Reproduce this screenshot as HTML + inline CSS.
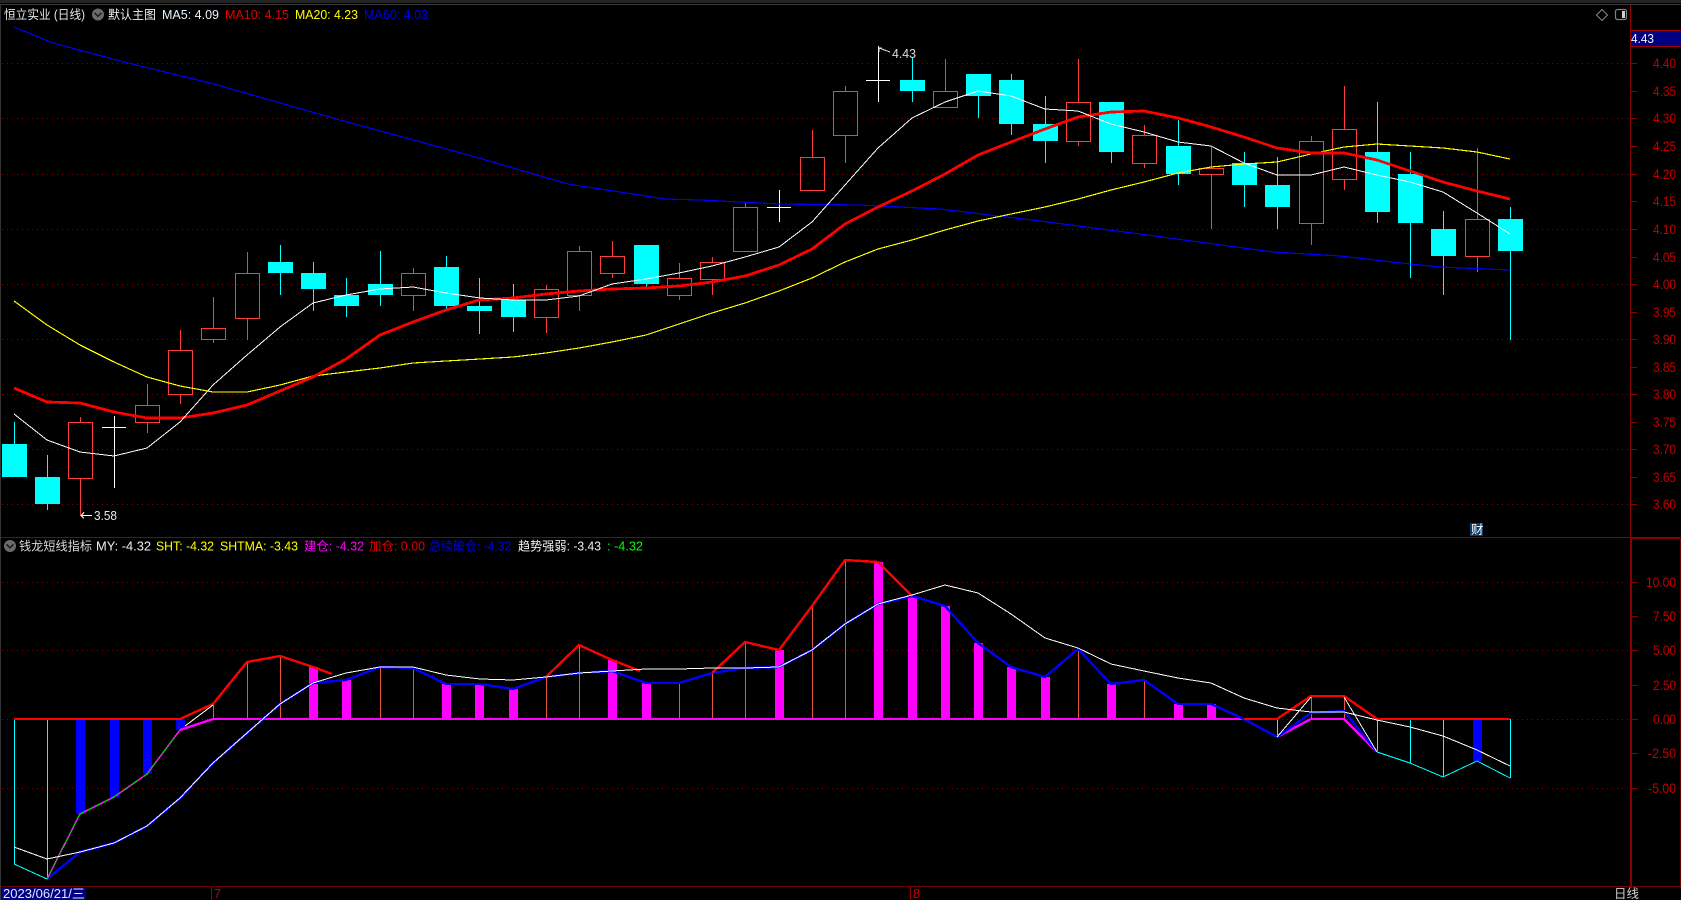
<!DOCTYPE html>
<html lang="zh-CN">
<head>
<meta charset="utf-8">
<title>恒立实业 (日线)</title>
<style>
html,body{margin:0;padding:0;background:#000;width:1681px;height:900px;overflow:hidden}
svg{display:block}
text{font-family:"Liberation Sans","Noto Sans CJK SC",sans-serif;font-size:12.5px}
.ax{fill:#c00000;font-size:13.5px;text-anchor:end}
</style>
</head>
<body>
<svg width="1681" height="900" viewBox="0 0 1681 900" xmlns="http://www.w3.org/2000/svg">
<rect width="1681" height="900" fill="#000"/>
<g shape-rendering="crispEdges">
<rect x="0" y="0" width="1681" height="3" fill="#242424"/>
<rect x="0" y="4" width="1681" height="1" fill="#3c3c3c"/>
<rect x="0" y="5" width="1" height="895" fill="#333"/>

<!-- dotted grid -->
<path fill="none" stroke="#8f0000" stroke-dasharray="1 4" d="M2 63.5H1628M2 118.5H1628M2 174.5H1628M2 229.5H1628M2 284.5H1628M2 339.5H1628M2 394.5H1628M2 449.5H1628M2 504.5H1628M2 582.5H1628M2 650.5H1628M2 719.5H1628M2 788.5H1628"/>

<!-- frame -->
<rect x="1" y="537" width="1630" height="1" fill="#8b0000"/>
<rect x="1630" y="5" width="1" height="533" fill="#8b0000"/>
<rect x="1630" y="537" width="2" height="351" fill="#8b0000"/>
<rect x="1630" y="537" width="51" height="2" fill="#8b0000"/>
<rect x="1680" y="537" width="1" height="351" fill="#5a0000"/>
<rect x="1" y="886" width="1680" height="1" fill="#700000"/>

<!-- axis ticks -->
<path stroke="#8b0000" fill="none" d="M1631 63.5h6M1631 91.5h6M1631 118.5h6M1631 146.5h6M1631 174.5h6M1631 201.5h6M1631 229.5h6M1631 257.5h6M1631 284.5h6M1631 312.5h6M1631 339.5h6M1631 367.5h6M1631 394.5h6M1631 422.5h6M1631 449.5h6M1631 477.5h6M1631 504.5h6M1632 582.5h6M1632 616.5h6M1632 650.5h6M1632 685.5h6M1632 719.5h6M1632 753.5h6M1632 788.5h6"/>

<!-- candles cyan -->
<path fill="none" stroke="#00ffff" d="M14.5 422V444M47.5 455V510M280.5 245V295M313.5 262V311M346.5 278V317M380.5 251V306M446.5 256V309M479.5 278V334M513.5 284V332M646.5 245V288M912.5 57V102M978.5 74V118M1011.5 74V135M1045.5 96V163M1111.5 102V163M1178.5 120V185M1244.5 152V207M1277.5 157V229M1377.5 102V223M1410.5 152V278M1443.5 211V295M1510.5 207V340"/>
<g fill="#00ffff">
<rect x="2" y="444" width="25" height="33"/><rect x="35" y="477" width="25" height="27"/><rect x="268" y="262" width="25" height="11"/><rect x="301" y="273" width="25" height="16"/><rect x="334" y="295" width="25" height="11"/><rect x="368" y="284" width="25" height="11"/><rect x="434" y="267" width="25" height="39"/><rect x="467" y="306" width="25" height="5"/><rect x="501" y="300" width="25" height="17"/><rect x="634" y="245" width="25" height="39"/><rect x="900" y="80" width="25" height="11"/><rect x="966" y="74" width="25" height="22"/><rect x="999" y="80" width="25" height="44"/><rect x="1033" y="124" width="25" height="17"/><rect x="1099" y="102" width="25" height="50"/><rect x="1166" y="146" width="25" height="28"/><rect x="1232" y="163" width="25" height="22"/><rect x="1265" y="185" width="25" height="22"/><rect x="1365" y="152" width="25" height="60"/><rect x="1398" y="174" width="25" height="49"/><rect x="1431" y="229" width="25" height="27"/><rect x="1498" y="219" width="25" height="32"/>
</g>

<!-- candles red -->
<path fill="none" stroke="#ff3c3c" d="M80.5 417V422M80.5 478V516M147.5 384V405M147.5 422V433M180.5 330V350M180.5 394V404M213.5 297V328M213.5 340V343M247.5 252V273M247.5 318V340M413.5 268V273M413.5 296V311M546.5 285V289M546.5 318V333M579.5 246V251M579.5 296V311M612.5 241V256M612.5 273V278M679.5 263V278M679.5 296V300M712.5 257V262M712.5 279V295M745.5 203V207M812.5 130V157M845.5 86V91M845.5 136V163M945.5 59V91M1078.5 59V102M1078.5 142V146M1144.5 125V135M1144.5 164V168M1211.5 147V168M1211.5 175V229M1311.5 136V141M1311.5 224V245M1344.5 86V129M1344.5 179V190M1477.5 148V219M1477.5 256V272"/>
<g fill="none" stroke="#ff3c3c">
<rect x="68.5" y="422.5" width="24" height="56"/><rect x="135.5" y="405.5" width="24" height="17"/><rect x="168.5" y="350.5" width="24" height="44"/><rect x="201.5" y="328.5" width="24" height="11"/><rect x="235.5" y="273.5" width="24" height="45"/><rect x="401.5" y="273.5" width="24" height="22"/><rect x="534.5" y="289.5" width="24" height="28"/><rect x="567.5" y="251.5" width="24" height="44"/><rect x="600.5" y="256.5" width="24" height="17"/><rect x="667.5" y="278.5" width="24" height="17"/><rect x="700.5" y="262.5" width="24" height="17"/><rect x="733.5" y="207.5" width="24" height="44"/><rect x="800.5" y="157.5" width="24" height="33"/><rect x="833.5" y="91.5" width="24" height="44"/><rect x="933.5" y="91.5" width="24" height="16"/><rect x="1066.5" y="102.5" width="24" height="39"/><rect x="1132.5" y="135.5" width="24" height="28"/><rect x="1199.5" y="168.5" width="24" height="6"/><rect x="1299.5" y="141.5" width="24" height="82"/><rect x="1332.5" y="129.5" width="24" height="50"/><rect x="1465.5" y="219.5" width="24" height="37"/>
</g>

<!-- doji crosses -->
<path fill="none" stroke="#fff" d="M114.5 416V488M102 427.5H126M779.5 190V222M767 207.5H791M878.5 46V102M866 80.5H890"/>

<!-- MA60 -->
<polyline fill="none" stroke="#0000ff" stroke-width="1.15" points="14,27 53,43 124,62 210,83 333,118 373,129 472,156 568,184 665,199 700,200 780,204 860,205 940,209 1040,221 1140,234 1273,252 1340,256 1410,264 1440,267 1510,270"/>
<!-- MA20 -->
<polyline fill="none" stroke="#ffff00" stroke-width="1.15" points="14,301 47,325 80,345 114,362 147,377 180,386 213,392 247,392 280,385 313,376 346,372 380,368 413,363 446,361 480,359 513,357 546,353 579,348 612,342 646,335 679,324 712,313 745,303 779,291 812,278 845,262 878,249 912,240 945,230 978,221 1011,214 1045,207 1078,199 1111,190 1144,182 1178,173 1211,167 1244,164 1277,162 1311,154 1344,147 1377,144 1410,146 1443,148 1477,152 1510,159"/>
<!-- MA10 -->
<polyline fill="none" stroke="#ff0000" stroke-width="2.8" points="14,388 47,402 80,403 114,412 147,418 180,418 213,413 247,405 280,391 313,377 346,359 380,335 413,322 446,310 479,300 513,298 546,294 579,291 612,289 646,288 679,286 712,282 745,276 779,265 812,249 845,224 878,207 912,191 945,174 978,155 1011,142 1045,129 1078,117 1111,112 1144,111 1178,118 1211,127 1244,137 1277,148 1311,153 1344,153 1377,160 1410,171 1443,182 1477,191 1510,199"/>
<!-- MA5 -->
<polyline fill="none" stroke="#ffffff" stroke-width="1" points="14,414 47,440 80,452 114,456 147,448 180,422 213,385 247,355 280,327 313,303 346,295 380,289 413,287 446,293 480,298 513,300 546,300 579,296 612,284 646,279 679,273 712,266 745,257 779,247 812,222 845,185 878,148 912,118 945,102 978,91 1011,96 1045,109 1078,111 1111,124 1144,132 1178,142 1211,146 1244,163 1277,175 1311,175 1344,167 1377,175 1410,182 1443,192 1477,213 1510,234"/>

<!-- lower: thin bars -->
<path fill="none" stroke="#00ffff" d="M14.5 719V864M47.5 719V879M1277.5 719V737M1377.5 719V752M1410.5 719V763M1443.5 719V777M1510.5 719V778"/>
<path fill="none" stroke="#e8543c" d="M213.5 719V704M247.5 719V662M280.5 719V656M380.5 719V667M413.5 719V668M546.5 719V677M579.5 719V645M679.5 719V683M712.5 719V673M745.5 719V642M812.5 719V606M845.5 719V560M1078.5 719V649M1144.5 719V680M1311.5 719V696M1344.5 719V696"/>
<!-- lower: thick bars -->
<g fill="#0000ff">
<rect x="76" y="719" width="9" height="95"/><rect x="110" y="719" width="9" height="78"/><rect x="143" y="719" width="9" height="55"/><rect x="176" y="719" width="9" height="11"/><rect x="1473" y="719" width="9" height="42"/>
</g>
<g fill="#ff00ff">
<rect x="309" y="667" width="9" height="52"/><rect x="342" y="680" width="9" height="39"/><rect x="442" y="684" width="9" height="35"/><rect x="475" y="684" width="9" height="35"/><rect x="509" y="689" width="9" height="30"/><rect x="608" y="660" width="9" height="59"/><rect x="642" y="683" width="9" height="36"/><rect x="775" y="650" width="9" height="69"/><rect x="874" y="562" width="9" height="157"/><rect x="908" y="596" width="9" height="123"/><rect x="941" y="606" width="9" height="113"/><rect x="974" y="643" width="9" height="76"/><rect x="1007" y="667" width="9" height="52"/><rect x="1041" y="677" width="9" height="42"/><rect x="1107" y="684" width="9" height="35"/><rect x="1174" y="704" width="9" height="15"/><rect x="1207" y="704" width="9" height="15"/>
</g>

<!-- lower: zero lines -->
<polyline fill="none" stroke="#ff00ff" stroke-width="2.4" points="180,730 213,719 1244,719"/>
<polyline fill="none" stroke="#ff00ff" stroke-width="2.4" points="1277,737 1311,719 1344,719 1377,752"/>

<!-- lower: blue -->
<polyline fill="none" stroke="#0000ff" stroke-width="2.4" points="47,879 80,852 114,843 147,826 180,798 213,763 247,733 280,704 313,683 346,680 380,667 413,668 446,684 480,684 513,689 546,677 579,673 612,671 646,683 679,683 712,673 745,668 779,667 812,650 845,624 878,604 912,596 945,606 978,643 1011,667 1045,677 1078,649 1111,684 1144,680 1178,704 1211,704 1244,719 1277,737 1311,713 1344,711 1377,752"/>
<!-- lower: red -->
<polyline fill="none" stroke="#ff0000" stroke-width="2.4" points="14,719 180,719 213,704 247,662 280,656 313,667 332,674"/>
<polyline fill="none" stroke="#ff0000" stroke-width="2.4" points="546,677 579,645 612,660 640,671"/>
<polyline fill="none" stroke="#ff0000" stroke-width="2.4" points="712,673 745,642 779,650 812,606 845,560 878,562 912,596"/>
<polyline fill="none" stroke="#ff0000" stroke-width="2.4" points="1244,719 1277,719 1311,696 1344,696 1377,719 1510,719"/>
<!-- lower: green/magenta tip line -->
<polyline fill="none" stroke="#ff00ff" stroke-width="1.6" points="47,879 80,814 114,797 147,774 180,730"/>
<polyline fill="none" stroke="#00d000" stroke-width="1.6" stroke-dasharray="1.5 1.5" points="47,879 80,814 114,797 147,774 180,730"/>
<!-- lower: cyan tail -->
<polyline fill="none" stroke="#00ffff" stroke-width="1" points="14,864 47,879"/>
<polyline fill="none" stroke="#00ffff" stroke-width="1" points="1377,752 1410,763 1443,777 1477,761 1510,778"/>
<!-- lower: white -->
<polyline fill="none" stroke="#ffffff" stroke-width="1" points="14,847 47,859 80,852 114,843 147,826 180,798 213,763 247,733 280,704 313,683 346,673 380,667 413,667 446,675 480,679 513,680 546,677 579,673 612,671 646,669 679,669 712,668 745,668 779,667 812,650 845,624 878,604 912,595 945,585 978,593 1011,614 1045,638 1078,648 1111,664 1144,671 1178,678 1211,683 1244,698 1277,708 1311,712 1344,712 1377,720 1410,727 1443,736 1477,750 1510,766"/>
<path fill="none" stroke="#fff" d="M185 726L213 705M1277 737L1311 697M1344 697L1377 752"/>

<!-- extreme markers -->
<path fill="none" stroke="#fff" d="M81 515.5H92M81 515.5l3-3M81 515.5l3 3"/>
<path fill="none" stroke="#ddd" d="M879 48L890 52M879 48h3M879 48v4"/>

<!-- price tag -->
<rect x="1631" y="30" width="50" height="16" fill="#000080"/>
<rect x="1630" y="30" width="51" height="1" fill="#a00000"/>
<rect x="1630" y="46" width="51" height="1" fill="#a00000"/>

<!-- date cell -->
<rect x="1" y="888" width="85" height="12" fill="#000080"/>
<path stroke="#8b0000" fill="none" d="M211.5 887V900M910.5 887V900"/>

<!-- cai flag -->
<rect x="1470" y="523" width="13" height="13" fill="#0a3a6a"/>
</g>

<!-- top right icons -->
<path d="M1602 9.5L1607.5 15L1602 20.5L1596.5 15Z" fill="none" stroke="#8a8a8a"/>
<rect x="1615.5" y="9.5" width="11" height="10" rx="2" fill="none" stroke="#808080" stroke-width="1.2"/>
<rect x="1622" y="11" width="3" height="7" fill="#cfcfcf"/>

<!-- chevron circles -->
<circle cx="98" cy="14.5" r="6" fill="#6b6b6b"/>
<path d="M94.5 12.8L98 16.3L101.5 12.8" fill="none" stroke="#1c1c1c" stroke-width="1.5"/>
<circle cx="10" cy="546" r="6" fill="#6b6b6b"/>
<path d="M6.5 544.3L10 547.8L13.5 544.3" fill="none" stroke="#1c1c1c" stroke-width="1.5"/>

<!-- header upper -->
<text x="4" y="19" fill="#dfe8e8" textLength="81" lengthAdjust="spacingAndGlyphs">恒立实业 (日线)</text>
<text x="108" y="19" fill="#e8f0f0" textLength="48" lengthAdjust="spacingAndGlyphs">默认主图</text>
<text x="162" y="19" fill="#e6f4ff" textLength="57" lengthAdjust="spacingAndGlyphs">MA5: 4.09</text>
<text x="225" y="19" fill="#e00000" textLength="64" lengthAdjust="spacingAndGlyphs">MA10: 4.15</text>
<text x="295" y="19" fill="#ffff00" textLength="63" lengthAdjust="spacingAndGlyphs">MA20: 4.23</text>
<text x="364" y="19" fill="#0000e6" textLength="64" lengthAdjust="spacingAndGlyphs">MA60: 4.03</text>

<!-- header lower -->
<text x="19" y="550.5" fill="#d8d8d8" font-size="12" textLength="73" lengthAdjust="spacingAndGlyphs">钱龙短线指标</text>
<text x="96" y="550.5" fill="#f0f0f0" textLength="55" lengthAdjust="spacingAndGlyphs">MY: -4.32</text>
<text x="156" y="550.5" fill="#ffff00" textLength="58" lengthAdjust="spacingAndGlyphs">SHT: -4.32</text>
<text x="220" y="550.5" fill="#ffff00" textLength="78" lengthAdjust="spacingAndGlyphs">SHTMA: -3.43</text>
<text x="304" y="550.5" fill="#ff00ff" textLength="60" lengthAdjust="spacingAndGlyphs">建仓: -4.32</text>
<text x="369" y="550.5" fill="#e00000" textLength="56" lengthAdjust="spacingAndGlyphs">加仓: 0.00</text>
<text x="429" y="550.5" fill="#0000e6" textLength="82" lengthAdjust="spacingAndGlyphs">总续破仓: -4.32</text>
<text x="518" y="550.5" fill="#f0f0f0" textLength="83" lengthAdjust="spacingAndGlyphs">趋势强弱: -3.43</text>
<text x="607" y="550.5" fill="#00ff00" textLength="36" lengthAdjust="spacingAndGlyphs">: -4.32</text>

<!-- price labels -->
<text class="ax" x="1676" y="68" textLength="23" lengthAdjust="spacingAndGlyphs">4.40</text>
<text class="ax" x="1676" y="96" textLength="23" lengthAdjust="spacingAndGlyphs">4.35</text>
<text class="ax" x="1676" y="123" textLength="23" lengthAdjust="spacingAndGlyphs">4.30</text>
<text class="ax" x="1676" y="151" textLength="23" lengthAdjust="spacingAndGlyphs">4.25</text>
<text class="ax" x="1676" y="179" textLength="23" lengthAdjust="spacingAndGlyphs">4.20</text>
<text class="ax" x="1676" y="206" textLength="23" lengthAdjust="spacingAndGlyphs">4.15</text>
<text class="ax" x="1676" y="234" textLength="23" lengthAdjust="spacingAndGlyphs">4.10</text>
<text class="ax" x="1676" y="262" textLength="23" lengthAdjust="spacingAndGlyphs">4.05</text>
<text class="ax" x="1676" y="289" textLength="23" lengthAdjust="spacingAndGlyphs">4.00</text>
<text class="ax" x="1676" y="317" textLength="23" lengthAdjust="spacingAndGlyphs">3.95</text>
<text class="ax" x="1676" y="344" textLength="23" lengthAdjust="spacingAndGlyphs">3.90</text>
<text class="ax" x="1676" y="372" textLength="23" lengthAdjust="spacingAndGlyphs">3.85</text>
<text class="ax" x="1676" y="399" textLength="23" lengthAdjust="spacingAndGlyphs">3.80</text>
<text class="ax" x="1676" y="427" textLength="23" lengthAdjust="spacingAndGlyphs">3.75</text>
<text class="ax" x="1676" y="454" textLength="23" lengthAdjust="spacingAndGlyphs">3.70</text>
<text class="ax" x="1676" y="482" textLength="23" lengthAdjust="spacingAndGlyphs">3.65</text>
<text class="ax" x="1676" y="509" textLength="23" lengthAdjust="spacingAndGlyphs">3.60</text>

<text class="ax" x="1676" y="587" textLength="30" lengthAdjust="spacingAndGlyphs">10.00</text>
<text class="ax" x="1676" y="621" textLength="23" lengthAdjust="spacingAndGlyphs">7.50</text>
<text class="ax" x="1676" y="655" textLength="23" lengthAdjust="spacingAndGlyphs">5.00</text>
<text class="ax" x="1676" y="690" textLength="23" lengthAdjust="spacingAndGlyphs">2.50</text>
<text class="ax" x="1676" y="724" textLength="23" lengthAdjust="spacingAndGlyphs">0.00</text>
<text class="ax" x="1676" y="758" textLength="28" lengthAdjust="spacingAndGlyphs">-2.50</text>
<text class="ax" x="1676" y="793" textLength="28" lengthAdjust="spacingAndGlyphs">-5.00</text>

<text x="1631" y="43" fill="#eef0ff" font-size="13.5" textLength="23" lengthAdjust="spacingAndGlyphs">4.43</text>
<text x="94" y="520" fill="#e6eef2" font-size="13" textLength="23" lengthAdjust="spacingAndGlyphs">3.58</text>
<text x="892" y="58" fill="#d8dde0" font-size="13" textLength="24" lengthAdjust="spacingAndGlyphs">4.43</text>
<text x="1471" y="534" fill="#fff" font-size="12">财</text>

<text x="3" y="898" fill="#dfe6ff" font-size="12" textLength="82" lengthAdjust="spacingAndGlyphs">2023/06/21/三</text>
<text x="214" y="898" fill="#d00000" font-size="12">7</text>
<text x="913" y="898" fill="#d00000" font-size="12">8</text>
<text x="1614" y="898" fill="#d0d0d0" font-size="12">日线</text>
</svg>
</body>
</html>
